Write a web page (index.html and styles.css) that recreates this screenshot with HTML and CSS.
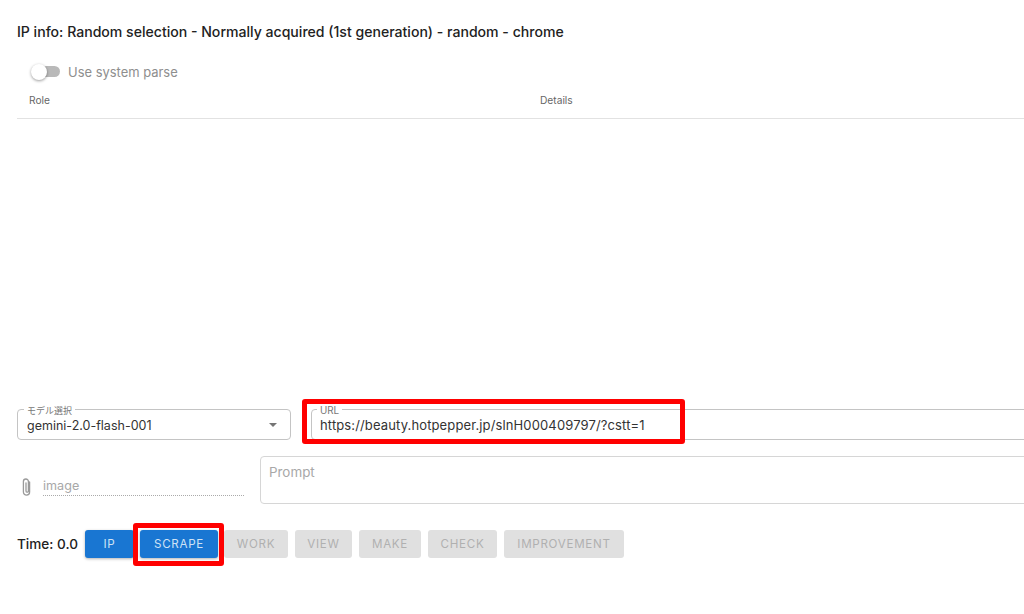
FILE: index.html
```html
<!DOCTYPE html>
<html lang="ja">
<head>
<meta charset="utf-8">
<title>Scrape</title>
<link rel="stylesheet" href="styles.css">
</head>
<body>
<main class="page">
  <h1 class="ip-info">IP info: Random selection - Normally acquired (1st generation) - random - chrome</h1>
  <label class="parse-row">
    <span class="switch"><span class="switch-track"></span><span class="switch-thumb"></span></span>
    <span class="parse-label">Use system parse</span>
  </label>
  <div class="table-head">
    <div class="col-role">Role</div>
    <div class="col-details">Details</div>
  </div>
  <div class="table-body"></div>
  <div class="row-fields">
    <div class="field field-model">
      <span class="legend">モデル選択</span>
      <span class="value value-model">gemini-2.0-flash-001</span>
      <svg class="caret" viewBox="0 0 8 4" width="8" height="4"><path d="M0 0h8L4 4z"/></svg>
    </div>
    <div class="field field-url">
      <span class="legend legend-url">URL</span>
      <span class="value value-url">https://beauty.hotpepper.jp/slnH000409797/?cstt=1</span>
      <span class="mark mark-url"></span>
    </div>
  </div>
  <div class="row-prompt">
    <div class="attach">
      <svg class="clip" viewBox="0 0 9 18" width="9" height="18" fill="none" stroke="#9a9a9a" stroke-width="1.3" stroke-linecap="round"><path d="M7.600 4v10a3.100 3.100 0 0 1-6.200 0V3.500a2.500 2.500 0 0 1 5 0v9.500a1.200 1.200 0 0 1-2.400 0V5"/></svg>
      <span class="image-input">image</span>
    </div>
    <div class="prompt">Prompt</div>
  </div>
  <div class="row-actions">
    <span class="time">Time: 0.0</span>
    <button class="btn btn-on btn-ip" type="button">IP</button>
    <button class="btn btn-on btn-scrape" type="button">SCRAPE<span class="mark mark-scrape"></span></button>
    <button class="btn btn-off btn-work" type="button">WORK</button>
    <button class="btn btn-off btn-view" type="button">VIEW</button>
    <button class="btn btn-off btn-make" type="button">MAKE</button>
    <button class="btn btn-off btn-check" type="button">CHECK</button>
    <button class="btn btn-off btn-improve" type="button">IMPROVEMENT</button>
  </div>
</main>
</body>
</html>
```
FILE: styles.css
```css
* { box-sizing: border-box; }
html, body { margin: 0; height: 100%; overflow: hidden; background: #fff; }
body { font-family: Inter, "Noto Sans CJK JP", sans-serif; color: #222; }
.page { width: 1024px; height: 614px; padding: 24px 0 0 17px; overflow: hidden; }
.ip-info { margin: 0; font-size: 14.08px; line-height: 16px; font-weight: 500; color: #222; }
.parse-row { display: flex; align-items: center; height: 24px; margin-top: 20px; padding-left: 14px; }
.switch { position: relative; width: 29px; height: 16px; flex: none; }
.switch-track { position: absolute; left: 3px; top: 2px; width: 26px; height: 11px; border-radius: 6px; background: #b9b9b9; }
.switch-thumb { position: absolute; left: 0; top: 0; width: 16px; height: 16px; border-radius: 50%; background: #fff; box-shadow: 0 1px 3px rgba(0,0,0,.4); }
.parse-label { margin-left: 8px; font-size: 12.95px; color: #8e8e8e; }
.table-head { display: flex; height: 35px; padding-bottom: 2px; align-items: center; border-bottom: 1px solid #e2e2e2; font-size: 10.2px; font-weight: 400; color: #666; margin-right: -80px; }
.col-role { width: 523px; padding-left: 12px; }
.table-body { height: 290px; }
.row-fields { display: flex; gap: 20px; margin-right: -80px; }
.field { position: relative; height: 31px; border: 1px solid #c4c4c4; border-radius: 4px; display: flex; align-items: center; padding-top: 1px; }
.field-model { width: 274px; padding-left: 9px; flex: none; }
.field-url { flex: 1; padding-left: 8px; }
.legend { position: absolute; left: 6px; top: -5px; padding: 0 3px; background: #fff; font-size: 9px; line-height: 11px; color: #777; }
.legend-url { font-size: 9.800px; left: 5px; }
.value { color: #333; }
.value-model { font-size: 12.5px; }
.value-url { font-size: 13px; letter-spacing: .13px; }
.caret { position: absolute; right: 13px; top: 13px; fill: #757575; }
.mark { position: absolute; border: 5px solid #f00; border-radius: 3px; pointer-events: none; }
.mark-url { left: -10px; top: -11px; width: 383px; height: 45px; }
.row-prompt { display: flex; margin-top: 16px; height: 48px; margin-right: -80px; }
.attach { position: relative; width: 227px; margin-right: 16px; height: 40px; flex: none; padding: 21px 0 0 26px; }
.clip { position: absolute; left: 5px; top: 22px; }
.image-input { display: block; height: 19px; border-bottom: 1px dotted #aaa; font-size: 12.6px; color: #a8a8a8; line-height: 17px; }
.prompt { flex: 1; border: 1px solid #d6d6d6; border-radius: 4px; padding: 7px 8px; font-size: 13.4px; color: #a8a8a8; }
.row-actions { display: flex; align-items: center; margin-top: 25px; height: 29px; }
.time { width: 68px; font-size: 13.6px; font-weight: 500; color: #222; }
.btn { position: relative; height: 28px; border: 0; border-radius: 3px; padding: 0; font: 11.6px/28px Inter, sans-serif; letter-spacing: .7px; text-align: center; }
.btn-on { background: #1976d2; color: #cfe2f5; box-shadow: 0 1px 3px rgba(0,0,0,.3); }
.btn-off { background: #e0e0e0; color: #b0b0b0; }
.btn-ip { width: 49px; }
.btn-scrape { width: 78px; margin-left: 6px; }
.btn-work { width: 64px; margin-left: 6px; }
.btn-view { width: 57px; margin-left: 7px; }
.btn-make { width: 62px; margin-left: 7px; }
.btn-check { width: 69px; margin-left: 7px; }
.btn-improve { width: 120px; margin-left: 7px; }
.mark-scrape { left: -7px; top: -7px; width: 91px; height: 43px; }
```
